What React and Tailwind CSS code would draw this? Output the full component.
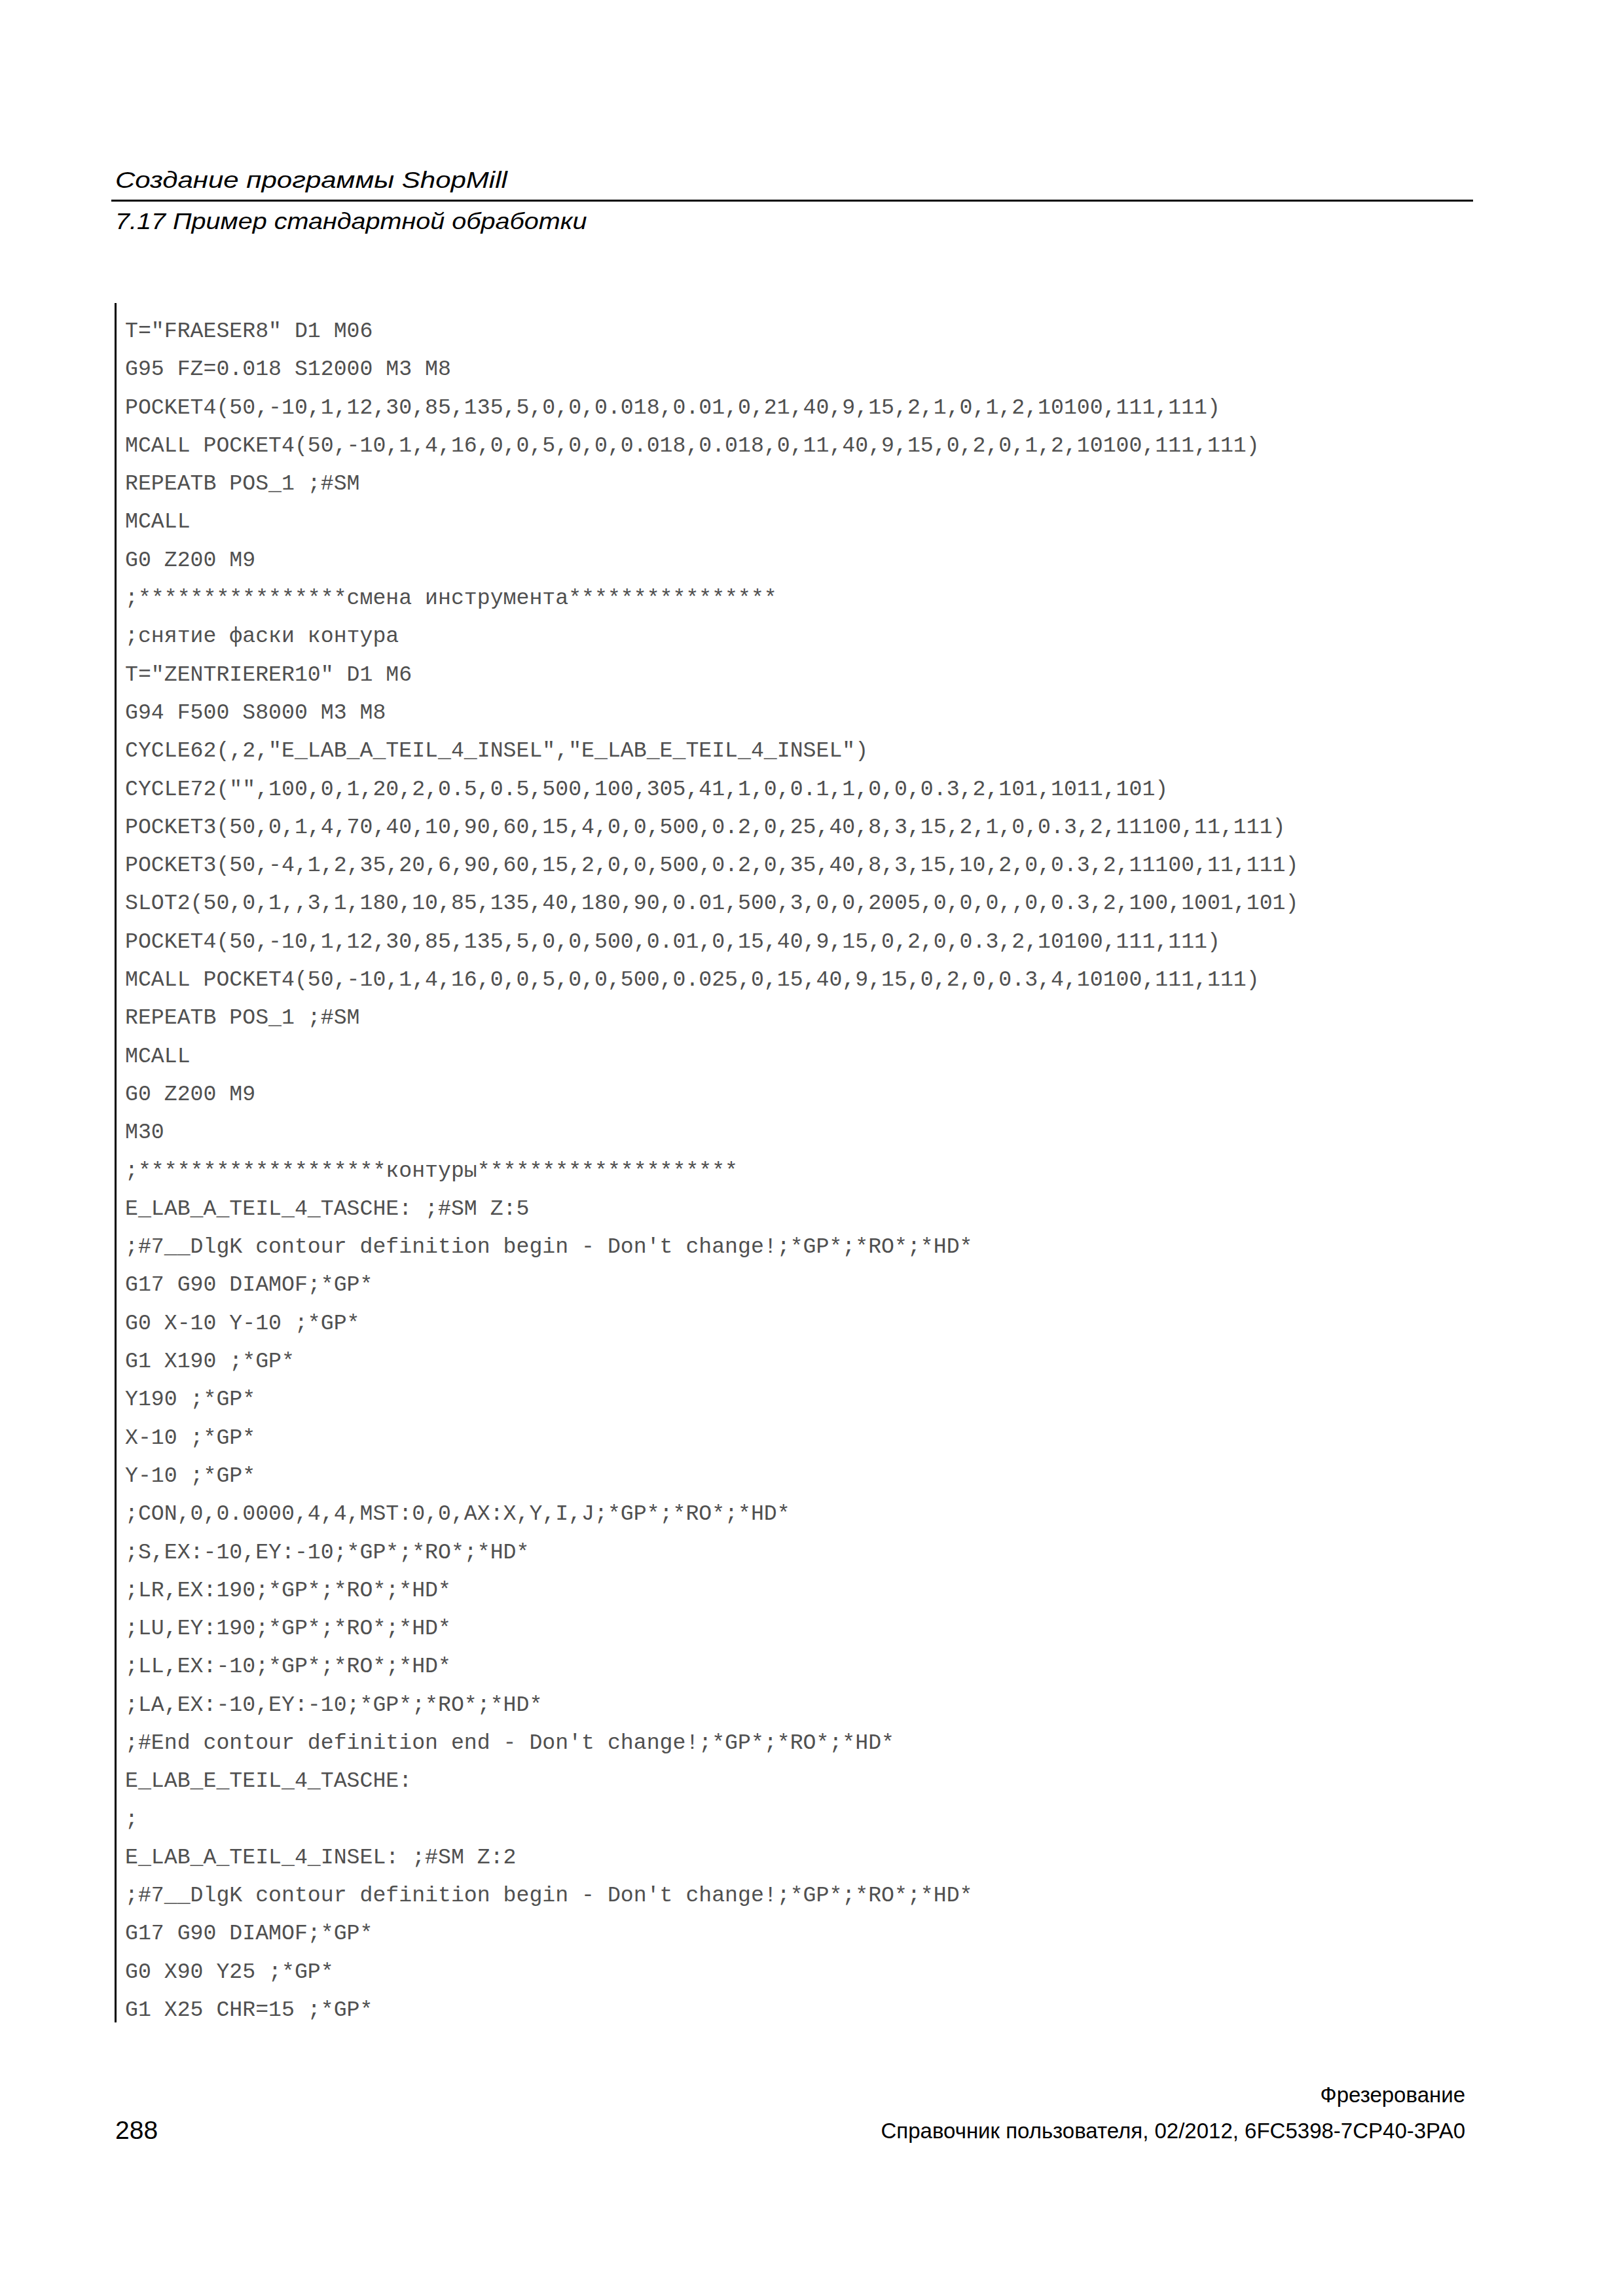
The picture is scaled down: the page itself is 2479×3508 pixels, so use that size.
import React from "react";

// строки программы ShopMill (как в справочнике)
const programLines = [
  'T="FRAESER8" D1 M06',
  "G95 FZ=0.018 S12000 M3 M8",
  "POCKET4(50,-10,1,12,30,85,135,5,0,0,0.018,0.01,0,21,40,9,15,2,1,0,1,2,10100,111,111)",
  "MCALL POCKET4(50,-10,1,4,16,0,0,5,0,0,0.018,0.018,0,11,40,9,15,0,2,0,1,2,10100,111,111)",
  "REPEATB POS_1 ;#SM",
  "MCALL",
  "G0 Z200 M9",
  ";****************смена инструмента****************",
  ";снятие фаски контура",
  'T="ZENTRIERER10" D1 M6',
  "G94 F500 S8000 M3 M8",
  'CYCLE62(,2,"E_LAB_A_TEIL_4_INSEL","E_LAB_E_TEIL_4_INSEL")',
  'CYCLE72("",100,0,1,20,2,0.5,0.5,500,100,305,41,1,0,0.1,1,0,0,0.3,2,101,1011,101)',
  "POCKET3(50,0,1,4,70,40,10,90,60,15,4,0,0,500,0.2,0,25,40,8,3,15,2,1,0,0.3,2,11100,11,111)",
  "POCKET3(50,-4,1,2,35,20,6,90,60,15,2,0,0,500,0.2,0,35,40,8,3,15,10,2,0,0.3,2,11100,11,111)",
  "SLOT2(50,0,1,,3,1,180,10,85,135,40,180,90,0.01,500,3,0,0,2005,0,0,0,,0,0.3,2,100,1001,101)",
  "POCKET4(50,-10,1,12,30,85,135,5,0,0,500,0.01,0,15,40,9,15,0,2,0,0.3,2,10100,111,111)",
  "MCALL POCKET4(50,-10,1,4,16,0,0,5,0,0,500,0.025,0,15,40,9,15,0,2,0,0.3,4,10100,111,111)",
  "REPEATB POS_1 ;#SM",
  "MCALL",
  "G0 Z200 M9",
  "M30",
  ";*******************контуры********************",
  "E_LAB_A_TEIL_4_TASCHE: ;#SM Z:5",
  ";#7__DlgK contour definition begin - Don't change!;*GP*;*RO*;*HD*",
  "G17 G90 DIAMOF;*GP*",
  "G0 X-10 Y-10 ;*GP*",
  "G1 X190 ;*GP*",
  "Y190 ;*GP*",
  "X-10 ;*GP*",
  "Y-10 ;*GP*",
  ";CON,0,0.0000,4,4,MST:0,0,AX:X,Y,I,J;*GP*;*RO*;*HD*",
  ";S,EX:-10,EY:-10;*GP*;*RO*;*HD*",
  ";LR,EX:190;*GP*;*RO*;*HD*",
  ";LU,EY:190;*GP*;*RO*;*HD*",
  ";LL,EX:-10;*GP*;*RO*;*HD*",
  ";LA,EX:-10,EY:-10;*GP*;*RO*;*HD*",
  ";#End contour definition end - Don't change!;*GP*;*RO*;*HD*",
  "E_LAB_E_TEIL_4_TASCHE:",
  ";",
  "E_LAB_A_TEIL_4_INSEL: ;#SM Z:2",
  ";#7__DlgK contour definition begin - Don't change!;*GP*;*RO*;*HD*",
  "G17 G90 DIAMOF;*GP*",
  "G0 X90 Y25 ;*GP*",
  "G1 X25 CHR=15 ;*GP*",
];

const App = () => {
  return (
    <div className="w-[2479px] h-[3508px] bg-white flex flex-col pt-[255px] text-black">
      {/* шапка страницы */}
      <header className="ml-[170px] w-[2080px] flex flex-col font-['Liberation_Sans',Arial,sans-serif] italic">
        <div className="pl-[6px] text-[35px] leading-[40px]">
          <span className="inline-block origin-left scale-x-120">Создание программы ShopMill</span>
        </div>
        <div className="mt-[10px] h-[3px] bg-black" />
        <div className="mt-[10px] pl-[6px] text-[35px] leading-[40px]">
          <span className="inline-block origin-left scale-x-113">7.17 Пример стандартной обработки</span>
        </div>
      </header>

      {/* листинг */}
      <section className="mt-[105px] ml-[175px] h-[2627px] border-l-[3px] border-black pl-[13px] pt-[14px]">
        <div className="font-['Liberation_Mono','Courier_New',monospace] text-[33.2px] leading-[58.3px] text-[#505050]">
          {programLines.map((line, i) => (
            <div key={i} className="whitespace-pre">
              {line}
            </div>
          ))}
        </div>
      </section>

      {/* подвал */}
      <footer className="mt-[92px] ml-[176px] w-[2062px] flex justify-between items-start font-['Liberation_Sans',Arial,sans-serif]">
        <p className="mt-[51px] text-[39px] leading-[44px]">288</p>
        <div className="flex flex-col items-end text-[33px] leading-[38px]">
          <p>Фрезерование</p>
          <p className="mt-[17px]">Справочник пользователя, 02/2012, 6FC5398-7CP40-3PA0</p>
        </div>
      </footer>
    </div>
  );
};

export default App;
